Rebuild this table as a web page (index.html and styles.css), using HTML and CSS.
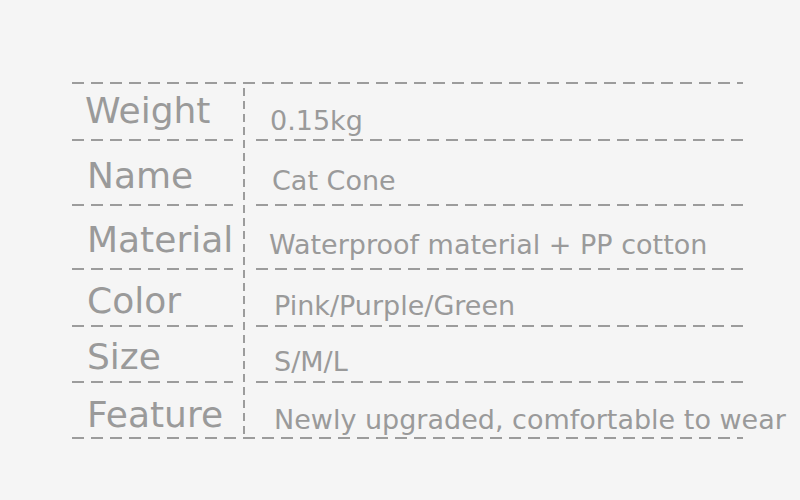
FILE: index.html
```html
<!DOCTYPE html>
<html lang="en">
<head>
<meta charset="utf-8">
<title>Cat Cone specifications</title>
<link rel="stylesheet" href="styles.css">
</head>
<body>
<div class="spec">
  <div class="rule"></div>
  <div class="grid">
    <div class="divider"></div>
    <div class="label row1">Weight</div><div class="value row1">0.15kg</div>
    <div class="label row2">Name</div><div class="value row2">Cat Cone</div>
    <div class="label row3">Material</div><div class="value row3">Waterproof material + PP cotton</div>
    <div class="label row4">Color</div><div class="value row4">Pink/Purple/Green</div>
    <div class="label row5">Size</div><div class="value row5">S/M/L</div>
    <div class="label row6 last">Feature</div><div class="value row6 last">Newly upgraded, comfortable to wear</div>
  </div>
  <div class="rule"></div>
</div>
</body>
</html>
```

FILE: styles.css
```css
html, body {
  margin: 0;
  padding: 0;
  background: #f5f5f5;
}

body {
  font-family: "DejaVu Sans", Verdana, sans-serif;
  color: #9a9a9a;
  overflow: hidden;
  width: 800px;
  height: 500px;
}

.spec {
  margin: 82px 0 0 72px;
  width: 671px;
}

.rule {
  height: 2px;
  background: repeating-linear-gradient(to right, #9c9c9c 0 12px, transparent 12px 19px);
}

.grid {
  display: grid;
  grid-template-columns: 161px 23px 487px;
  grid-template-rows: 57px 65px 64px 57px 56px 54px;
}

.divider {
  grid-column: 2;
  grid-row: 1 / -1;
  width: 2px;
  margin: 4px 0 2px 10px;
  background: repeating-linear-gradient(to bottom, #9c9c9c 0 8px, transparent 8px 13px);
}

.label, .value {
  display: flex;
  align-items: flex-end;
  white-space: nowrap;
  background: repeating-linear-gradient(to right, #9c9c9c 0 12px, transparent 12px 19px) left bottom / 100% 2px no-repeat;
}

.last {
  background: none;
}

.label {
  grid-column: 1;
  font-size: 36px;
  line-height: 36px;
  padding: 0 0 12px 15px;
}

.label.row1 { padding-left: 13px; }

.value {
  grid-column: 3;
  font-size: 27px;
  line-height: 27px;
  padding: 0 0 12px 16px;
}

.value.row1 { padding-bottom: 7px; padding-left: 14px; }
.value.row3 { padding-left: 13px; }
.label.row4, .value.row4 { padding-bottom: 8px; }
.value.row4, .value.row5, .value.row6 { padding-left: 18px; }
.label.row5, .value.row5 { padding-bottom: 8px; }
.label.row6, .value.row6 { padding-bottom: 4px; }
```
